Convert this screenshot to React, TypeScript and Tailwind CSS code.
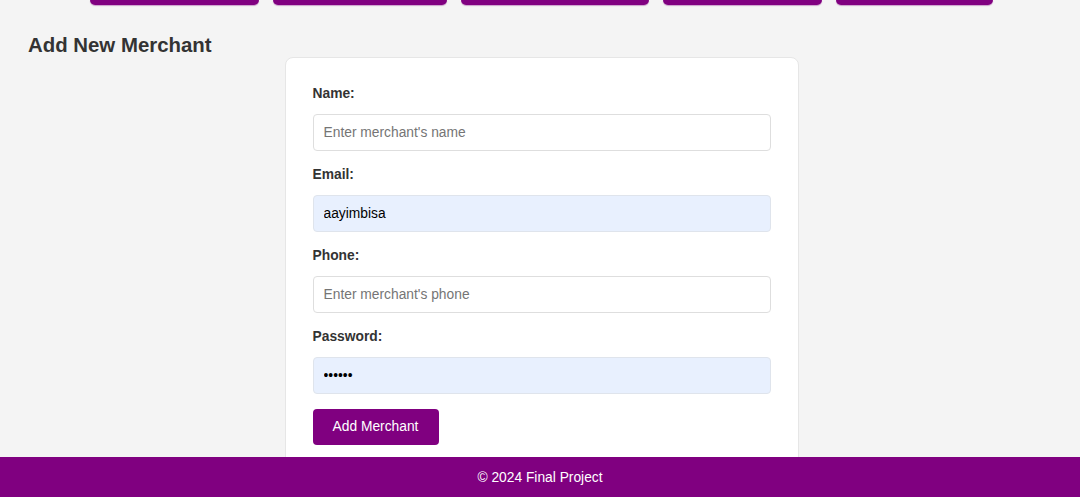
import { useState, FormEvent } from 'react';

const navWidths = ['w-[169px]', 'w-[174px]', 'w-[188px]', 'w-[159px]', 'w-[157px]'];

export default function App() {
    const [name, setName] = useState('');
    const [email, setEmail] = useState('aayimbisa');
    const [phone, setPhone] = useState('');
    const [password, setPassword] = useState('123456');

    const handleSubmit = (e: FormEvent<HTMLFormElement>) => {
        e.preventDefault();
    };

    return (
        <div className="min-h-screen bg-[#f4f4f4] text-[#333] font-['Liberation_Sans',Arial,sans-serif] pb-[60px]">
            <nav className="flex justify-center gap-[14px] pl-[2px]">
                {navWidths.map((w, i) => (
                    <div key={i} className={`${w} h-[5px] bg-[#800080] rounded-b-[5px] shadow-[0_1px_1px_rgba(128,0,128,0.35)]`}></div>
                ))}
            </nav>

            <h2 className="ml-[28px] mt-[28px] text-[20.4px] leading-[24px] font-bold text-[#333]">Add New Merchant</h2>

            <div className="flex justify-center pl-[3px]">
                <form onSubmit={handleSubmit} className="w-[514px] bg-white border border-[#e6e6e6] rounded-[8px] px-[27px] pt-[27px] pb-[28px]">
                    <label className="block text-[13.8px] leading-[17px] font-bold mb-[12px]">Name:</label>
                    <input
                        type="text"
                        value={name}
                        placeholder="Enter merchant's name"
                        onChange={(e) => setName(e.target.value)}
                        className="block w-full h-[37px] mb-[15px] px-[10px] text-[13.8px] text-black placeholder:text-[#757575] border border-[#dedede] rounded-[4px] outline-none"
                    />
                    <label className="block text-[13.8px] leading-[17px] font-bold mb-[12px]">Email:</label>
                    <input
                        type="text"
                        value={email}
                        onChange={(e) => setEmail(e.target.value)}
                        className="block w-full h-[37px] mb-[15px] px-[10px] text-[13.8px] text-black bg-[#e8f0fe] border border-[#dfe4ec] rounded-[4px] outline-none"
                    />
                    <label className="block text-[13.8px] leading-[17px] font-bold mb-[12px]">Phone:</label>
                    <input
                        type="text"
                        value={phone}
                        placeholder="Enter merchant's phone"
                        onChange={(e) => setPhone(e.target.value)}
                        className="block w-full h-[37px] mb-[15px] px-[10px] text-[13.8px] text-black placeholder:text-[#757575] border border-[#dedede] rounded-[4px] outline-none"
                    />
                    <label className="block text-[13.8px] leading-[17px] font-bold mb-[12px]">Password:</label>
                    <input
                        type="password"
                        value={password}
                        onChange={(e) => setPassword(e.target.value)}
                        className="block w-full h-[37px] mb-[15px] px-[10px] text-[13.8px] text-black bg-[#e8f0fe] border border-[#dfe4ec] rounded-[4px] outline-none"
                    />
                    <button type="submit" className="w-[126px] h-[36px] bg-[#800080] text-white text-[13.8px] rounded-[4px]">Add Merchant</button>
                </form>
            </div>

            <footer className="fixed bottom-0 left-0 right-0 h-[40px] pt-[3px] flex items-center justify-center bg-[#800080] text-white text-[13.8px]">
                © 2024 Final Project
            </footer>
        </div>
    );
}
